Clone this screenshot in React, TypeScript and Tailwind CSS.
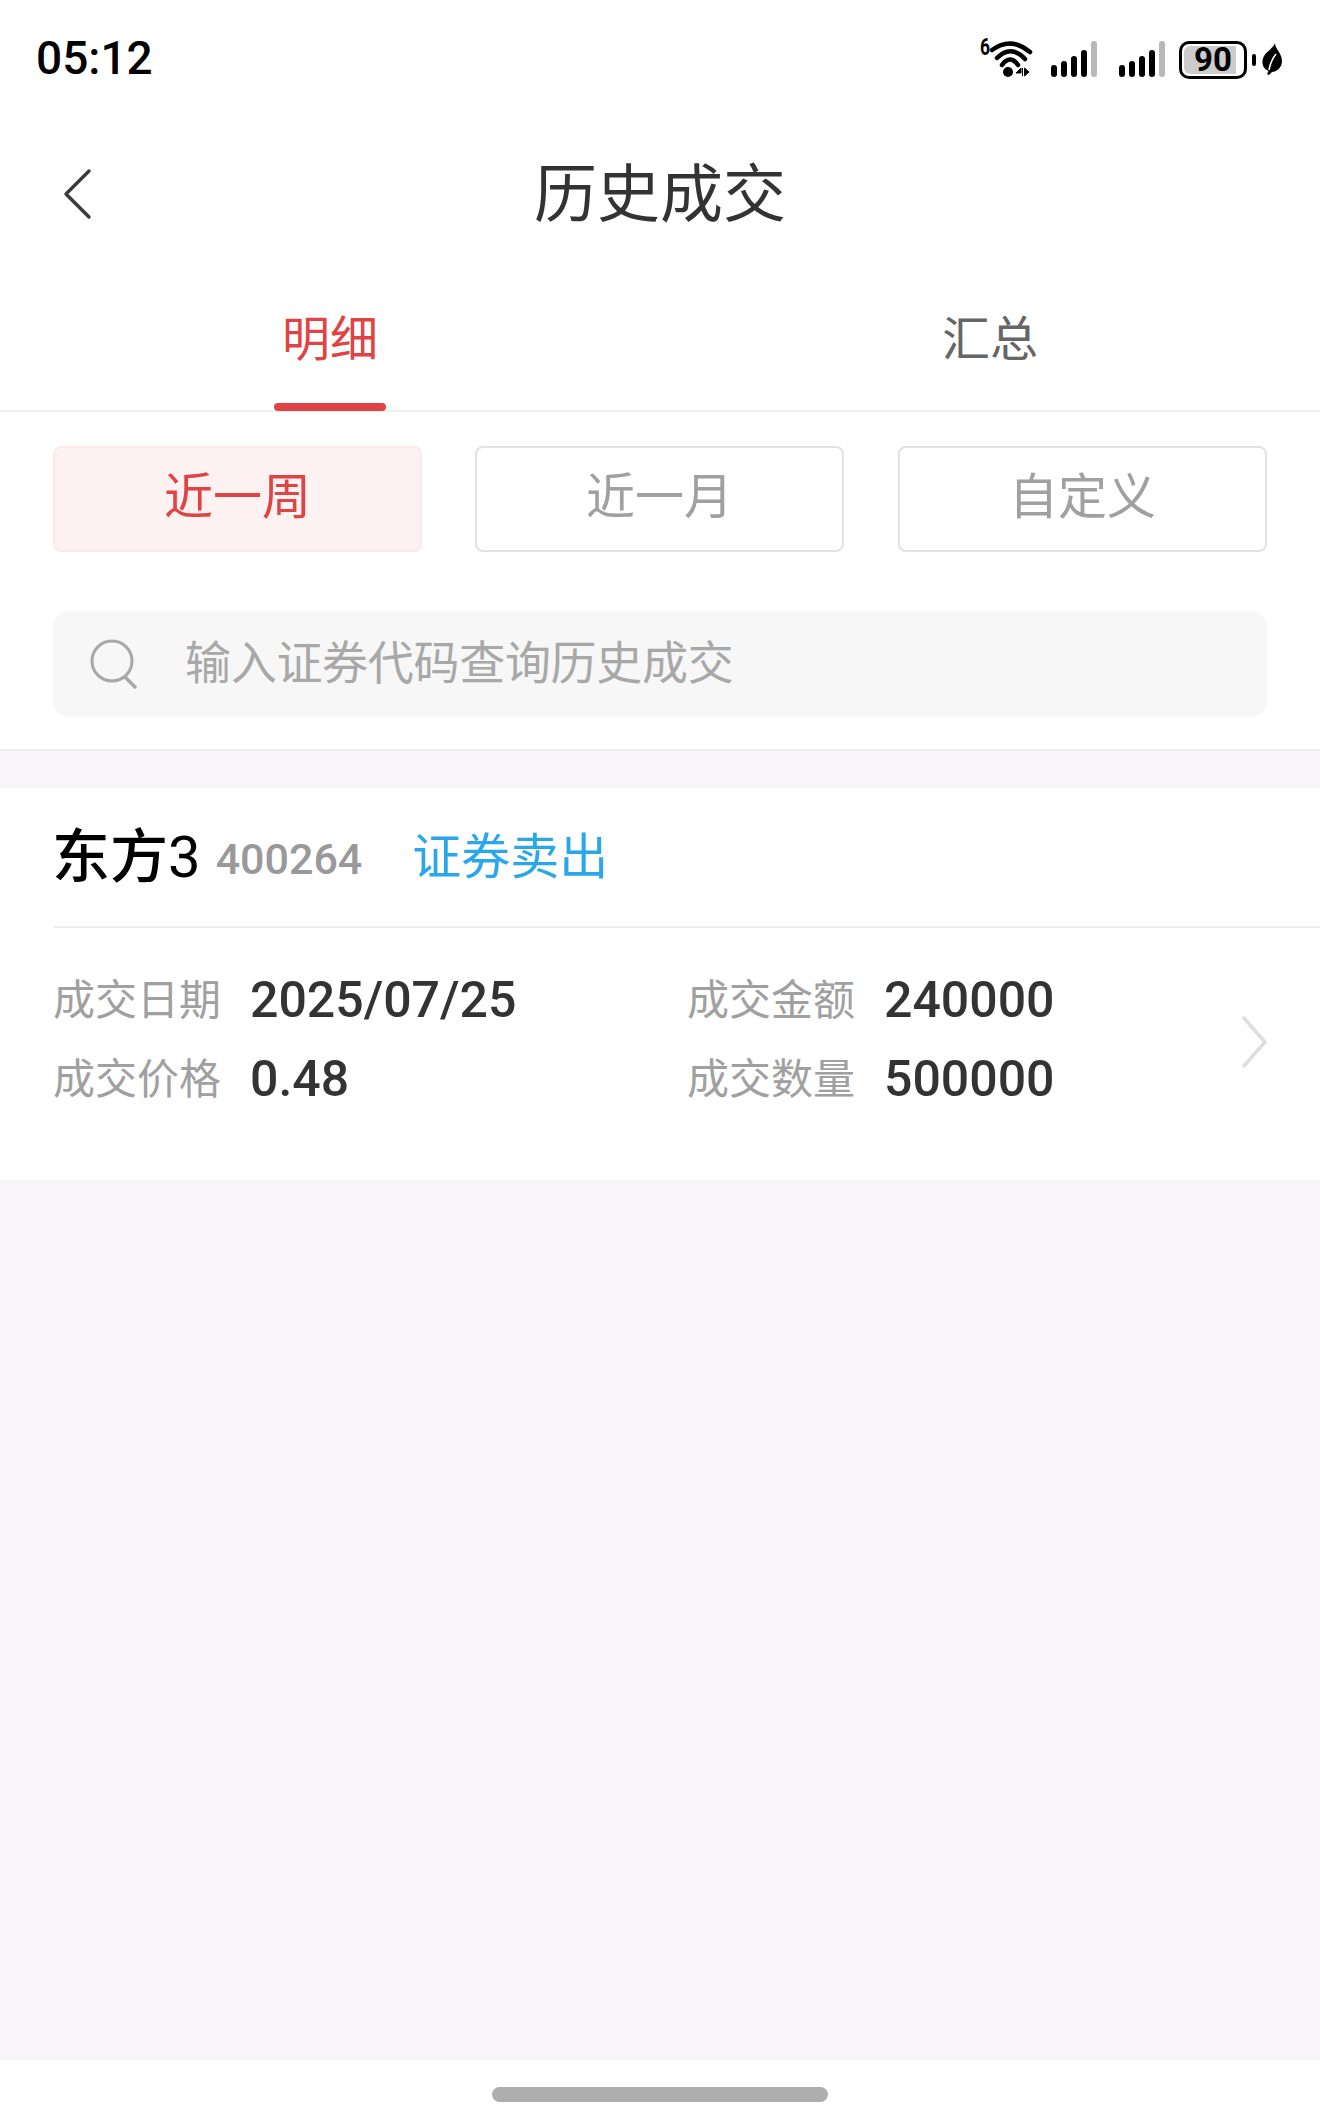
import React from 'react';

const SignalIcon: React.FC = () => (
  <svg width="46" height="37" viewBox="0 0 46 37">
    <rect x="0" y="24" width="6" height="12" rx="3" fill="#000" />
    <rect x="10" y="20" width="6" height="16" rx="3" fill="#000" />
    <rect x="20" y="15" width="6" height="21" rx="3" fill="#000" />
    <rect x="30" y="9" width="6" height="27" rx="3" fill="#000" />
    <rect x="40" y="0" width="6" height="36" rx="3" fill="#b8b8b8" />
  </svg>
);

const WifiIcon: React.FC = () => (
  <svg className="overflow-visible" width="54" height="40" viewBox="0 0 54 40">
    <text x="0" y="18" fontSize="23" fontWeight="700" fontFamily="Roboto, sans-serif" fill="#000" textLength="10" lengthAdjust="spacingAndGlyphs">6</text>
    <path d="M12 13 Q31 -1 50 15" fill="none" stroke="#000" strokeWidth="4.5" strokeLinecap="round" />
    <path d="M17 21 Q31 7 45 22" fill="none" stroke="#000" strokeWidth="4.5" strokeLinecap="round" />
    <path d="M22 28 Q30 17 38 28" fill="none" stroke="#000" strokeWidth="4.5" strokeLinecap="round" />
    <circle cx="28" cy="35" r="5" fill="#000" />
    <path d="M41 31 L36 36 H41 Z M42.5 31 V39 M44.5 31 L49 35 L44.5 39 Z" fill="#000" stroke="#000" strokeWidth="1" />
  </svg>
);

const LeafIcon: React.FC = () => (
  <svg width="20" height="32" viewBox="0 0 20 32">
    <path d="M13 0 C13 6 20 10 20 18 C20 25 14 29 10 29 L7 32 L5 31 L6.5 28 C1 26 -1 20 1.5 14 C4 8 11 6 13 0 Z" fill="#000" />
    <path d="M7 27 C8 21 10 16 14 11" fill="none" stroke="#fff" strokeWidth="1.6" />
  </svg>
);

const Detail: React.FC<{ label: string; value: string }> = ({ label, value }) => (
  <div className="flex h-[79px] items-center">
    <span className="w-[197px] text-[42px] text-[#a0a0a0]">{label}</span>
    <span className="text-[50px] font-medium text-[#333333]">{value}</span>
  </div>
);

export default function App() {
  return (
    <div className="flex h-[2120px] w-[1320px] flex-col overflow-hidden bg-[#f7f5f8] font-[Roboto,'Noto_Sans_CJK_SC',sans-serif]">
      {/* 状态栏 */}
      <div className="flex h-[110px] items-start justify-between bg-white pl-[36px] pr-[38px]">
        <span className="mt-[31px] text-[46px] font-medium leading-[54px] text-black">05:12</span>
        <div className="mt-[37px] flex items-start">
          <WifiIcon />
          <div className="ml-[17px] mt-[4px]"><SignalIcon /></div>
          <div className="ml-[22px] mt-[4px]"><SignalIcon /></div>
          <div className="relative ml-[14px] mt-[4px] flex h-[38px] w-[68px] items-center justify-center rounded-[10px] border-[3px] border-black text-[33px] font-bold leading-[32px] text-black">
            <div className="absolute inset-y-[2px] left-[2px] w-[52px] rounded-l-md bg-[#cccccc]" />
            <span className="relative">90</span>
          </div>
          <div className="ml-[5px] mt-[17px] h-[12px] w-[4px] rounded-sm bg-black" />
          <div className="ml-[6px] mt-[6px]"><LeafIcon /></div>
        </div>
      </div>

      {/* 标题栏 */}
      <div className="relative flex h-[164px] items-center justify-center bg-white pt-[5px]">
        <svg className="absolute left-[62px] top-[58px]" width="30" height="52" viewBox="0 0 30 52">
          <path d="M27 3 L4 26 L27 49" fill="none" stroke="#3c3c3c" strokeWidth="3.5" strokeLinecap="round" strokeLinejoin="round" />
        </svg>
        <span className="text-[63px] leading-none text-[#333333]">历史成交</span>
      </div>

      {/* 明细/汇总 */}
      <div className="relative flex h-[138px] border-b-2 border-[#f0f0f0] bg-white">
        <div className="flex h-[132px] flex-1 items-center justify-center text-[48px] text-[#e04343]">明细</div>
        <div className="flex h-[132px] flex-1 items-center justify-center text-[48px] text-[#666666]">汇总</div>
        <div className="absolute left-[274px] top-[129px] h-[8px] w-[112px] rounded-sm bg-[#e04343]" />
      </div>

      {/* 筛选 */}
      <div className="border-b-2 border-[#eeeeee] bg-white px-[53px] pb-[32px] pt-[34px]">
        <div className="flex gap-[53px]">
          <div className="flex h-[106px] w-[369px] items-center justify-center rounded-lg border-2 border-[#fbeaea] bg-[#fdf1f1] pb-[2px] text-[49px] text-[#e04343]">近一周</div>
          <div className="flex h-[106px] w-[369px] items-center justify-center rounded-lg border-2 border-[#e2e2e2] pb-[2px] text-[49px] text-[#a0a0a0]">近一月</div>
          <div className="ml-px flex h-[106px] w-[369px] items-center justify-center rounded-lg border-2 border-[#e2e2e2] pb-[2px] text-[49px] text-[#a0a0a0]">自定义</div>
        </div>
        <div className="mt-[59px] flex h-[106px] items-center rounded-2xl bg-[#f7f7f7] pl-[36px]">
          <svg width="50" height="50" viewBox="0 0 50 50">
            <circle cx="23" cy="22" r="20" fill="none" stroke="#a8a8a8" strokeWidth="3" />
            <path d="M36 38 L47 49" fill="none" stroke="#a8a8a8" strokeWidth="3.5" />
          </svg>
          <span className="mb-[2px] ml-[46px] text-[46px] tracking-[-0.3px] text-[#a8a8a8]">输入证券代码查询历史成交</span>
        </div>
      </div>

      {/* 成交记录 */}
      <div className="mt-[37px] h-[392px] bg-white">
        <div className="flex h-[138px] items-center pl-[52px]">
          <span className="text-[58px] font-medium text-black">东方<span className="font-normal">3</span></span>
          <span className="ml-[15px] mt-[4px] text-[43px] font-medium text-[#999999]">400264</span>
          <span className="ml-[50px] mt-[2px] text-[49px] text-[#2aa7e8]">证券卖出</span>
        </div>
        <div className="ml-[53px] h-[2px] bg-[#f0f0f0]" />
        <div className="relative flex pl-[53px] pt-[33px]">
          <div className="w-[634px]">
            <Detail label="成交日期" value="2025/07/25" />
            <Detail label="成交价格" value="0.48" />
          </div>
          <div>
            <Detail label="成交金额" value="240000" />
            <Detail label="成交数量" value="500000" />
          </div>
          <svg className="absolute left-[1240px] top-[87px]" width="28" height="54" viewBox="0 0 28 54">
            <path d="M3 2 L25 27 L3 52" fill="none" stroke="#dedede" strokeWidth="3.5" />
          </svg>
        </div>
      </div>

      {/* 底部横条 */}
      <div className="mt-auto flex h-[60px] justify-center bg-white pt-[27px]">
        <div className="h-[15px] w-[336px] rounded-full bg-[#aeaeae]" />
      </div>
    </div>
  );
}
